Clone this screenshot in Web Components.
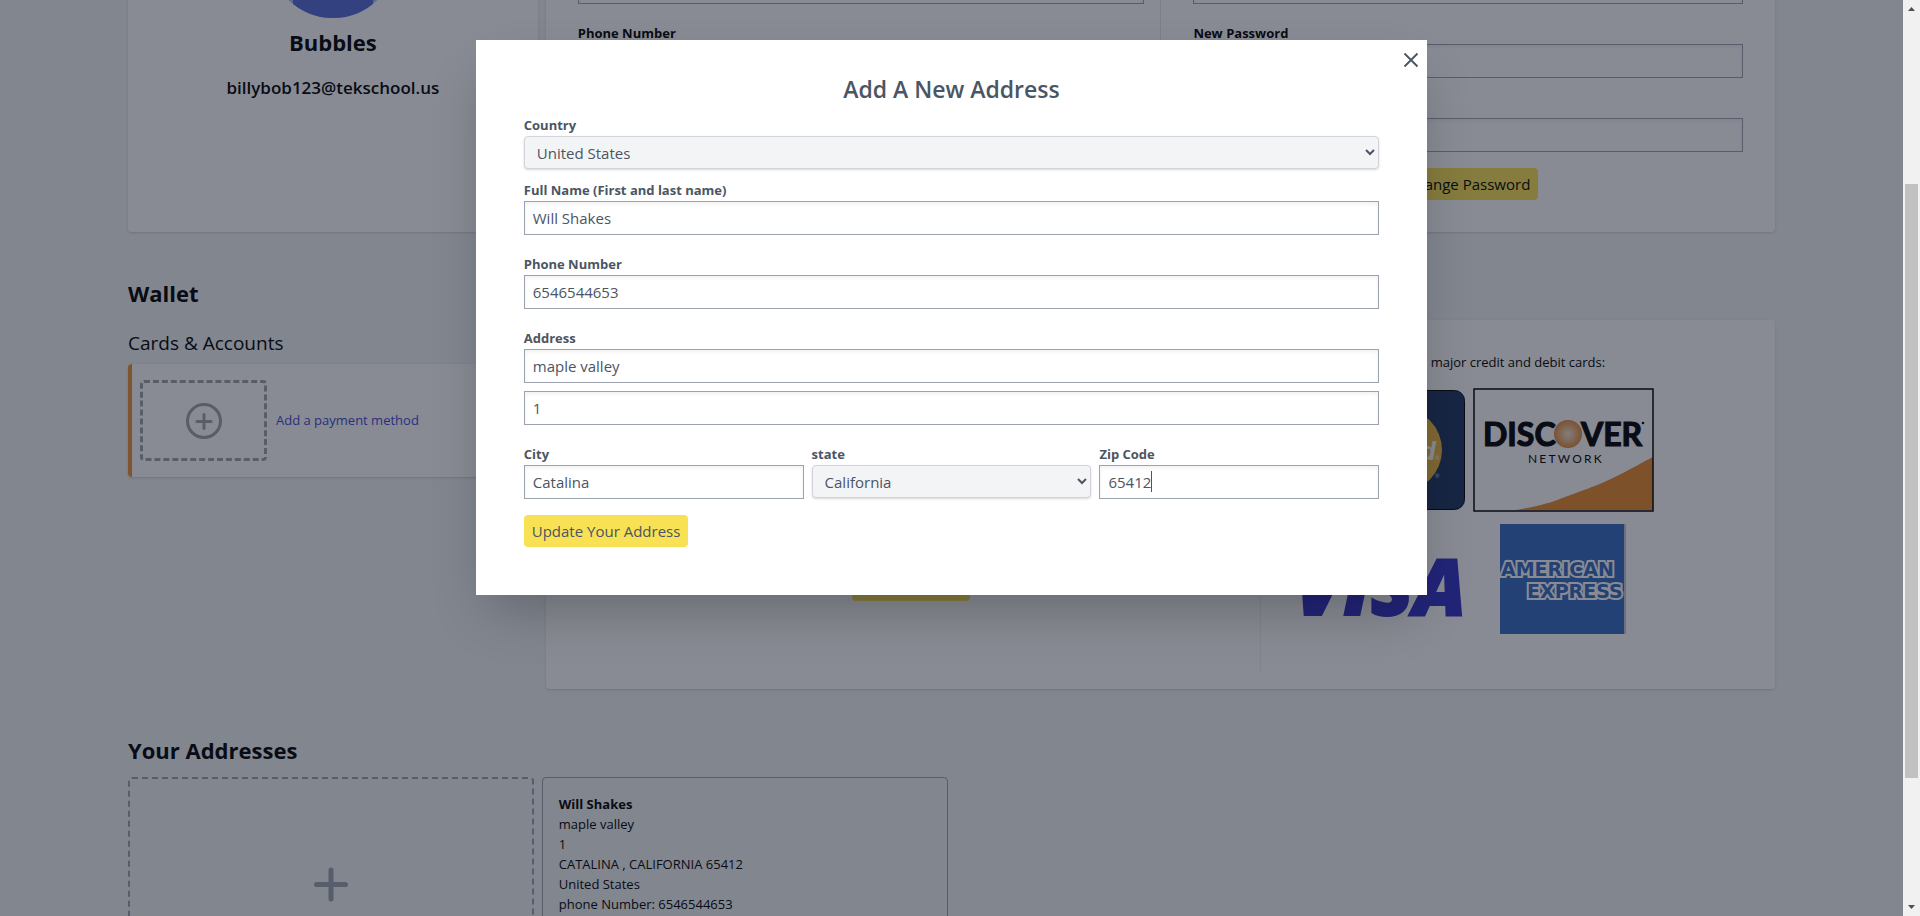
<!DOCTYPE html>
<html lang="en">
<head>
<meta charset="utf-8">
<title>Account</title>
<style>
  html, body { margin: 0; height: 100%; }
  body {
    font-family: "Open Sans", "Noto Sans", sans-serif;
    font-size: 15px;
    line-height: 24px;
    color: #000;
    overflow: hidden;
  }
</style>
</head>
<body>
<app-shell>
  <account-page></account-page>
  <address-dialog slot="dialog"></address-dialog>
</app-shell>

<script>
const define = (name, html, init) => {
  const template = document.createElement('template');
  template.innerHTML = '<style>*{box-sizing:border-box}h1,h2,h3,p{margin:0}[hidden]{display:none}</style>' + html;
  customElements.define(name, class extends HTMLElement {
    constructor() {
      super();
      this.attachShadow({ mode: 'open' }).append(template.content.cloneNode(true));
    }
    connectedCallback() { if (init) init(this, this.shadowRoot); }
  });
};

/* ---------- form controls ---------- */
define('text-field', `
<style>
  :host { display: block; min-width: 0; }
  label { display: block; font-size: 13px; font-weight: 700; line-height: 18px; padding-bottom: 2px; }
  .box { position: relative; }
  input {
    display: block; width: 100%; height: 34px; margin: 0; padding: 0 8px;
    border: 1px solid #9ca3af; border-radius: 0; background: #fff; color: inherit;
    font: inherit; box-shadow: inset 0 2px 4px rgba(0,0,0,.06); outline: none;
  }
  .caret { position: absolute; top: 6px; left: 52px; width: 1px; height: 21px; background: #4b5563; }
</style>
<label for="field"></label>
<div class="box"><input id="field" type="text"><span class="caret" hidden></span></div>`,
(host, root) => {
  const label = root.querySelector('label'), input = root.querySelector('input');
  const text = host.getAttribute('label');
  if (text) label.textContent = text; else label.hidden = true;
  if (host.hasAttribute('name')) input.setAttribute('aria-label', host.getAttribute('name'));
  input.type = host.getAttribute('type') || 'text';
  input.value = host.getAttribute('value') || '';
  root.querySelector('.caret').hidden = !host.hasAttribute('editing');
});

define('select-field', `
<style>
  :host { display: block; min-width: 0; }
  label { display: block; font-size: 13px; font-weight: 700; line-height: 18px; padding-bottom: 2px; }
  select {
    display: block; width: 100%; height: 33px; margin: 0; padding: 0 8px;
    border: 1px solid #d1d5db; border-radius: 4px; background-color: #f3f4f6; color: inherit;
    font: inherit; box-shadow: 0 1px 3px rgba(0,0,0,.1), 0 1px 2px rgba(0,0,0,.06);
  }
</style>
<label for="field"></label>
<select id="field"></select>`,
(host, root) => {
  root.querySelector('label').textContent = host.getAttribute('label');
  root.querySelector('select').replaceChildren(new Option(host.getAttribute('value')));
});

define('yellow-button', `
<style>
  :host { display: block; width: fit-content; }
  button {
    display: block; height: 32px; margin: 0; padding: 0 8px; border: 0; border-radius: 4px;
    background: #f8e154; color: inherit; font: inherit; white-space: nowrap; cursor: pointer;
  }
</style>
<button type="button"><slot></slot></button>`);

define('white-card', `
<style>
  :host {
    display: block; background: #fff; border-radius: 4px;
    box-shadow: 0 1px 3px rgba(0,0,0,.1), 0 1px 2px rgba(0,0,0,.06);
  }
</style>
<slot></slot>`);

/* ---------- profile ---------- */
define('profile-summary', `
<style>
  :host { display: flex; flex-direction: column; align-items: center; padding: 32px; }
  svg { display: block; width: 128px; height: 128px; }
  h2 { font-size: 22px; line-height: 32px; font-weight: 700; margin: 8px 0 16px; }
  p { font-size: 17px; line-height: 28px; font-weight: 600; }
</style>
<svg viewBox="0 0 128 128" aria-hidden="true">
  <clipPath id="round"><circle cx="64" cy="64" r="64"/></clipPath>
  <g clip-path="url(#round)">
    <rect width="128" height="128" fill="#a9bdf0"/>
    <rect x="24" y="56" width="80" height="72" fill="#556ad9"/>
    <circle cx="64" cy="44" r="24" fill="#556ad9"/>
  </g>
</svg>
<h2>Bubbles</h2>
<p>billybob123@tekschool.us</p>`);

define('profile-forms', `
<style>
  :host { display: grid; grid-template-columns: 1fr 1fr; }
  form { display: flex; flex-direction: column; gap: 20px; padding: 32px 16px 32px 32px; }
  form + form { padding-right: 32px; border-left: 1px solid #e5e7eb; }
  h3 { font-size: 22px; line-height: 36px; margin-bottom: 4px; }
  .last { display: grid; gap: 16px; justify-items: center; }
  .last text-field { width: 100%; }
</style>
<form>
  <h3>Personal Information</h3>
  <text-field label="Name"></text-field>
  <text-field label="Phone Number"></text-field>
</form>
<form>
  <h3>Password</h3>
  <text-field label="Previous Password" type="password"></text-field>
  <text-field label="New Password" type="password"></text-field>
  <div class="last">
    <text-field label="New Password Again" type="password"></text-field>
    <yellow-button>Change Password</yellow-button>
  </div>
</form>`);

/* ---------- wallet ---------- */
define('payment-method', `
<style>
  :host { display: block; }
  .row {
    display: flex; align-items: center; gap: 9px; padding: 16px 8px;
    border-left: 4px solid #ed9038; border-radius: 4px;
  }
  .slot {
    display: grid; place-items: center; width: 127px; height: 81px;
    border: 3px dashed #a0a2a6; border-radius: 4px;
  }
  svg { display: block; width: 36px; height: 36px; }
  a { font-size: 13px; line-height: 18px; padding-bottom: 2px; color: #3f48d4; text-decoration: none; }
</style>
<white-card><div class="row">
  <div class="slot">
    <svg viewBox="0 0 36 36" fill="none" stroke="#a0a2a6" stroke-linecap="round" aria-hidden="true">
      <circle cx="18" cy="18" r="16.5" stroke-width="3"/>
      <path d="M18 11.500v14M11 18.500h14" stroke-width="3"/>
    </svg>
  </div>
  <a href="#payment">Add a payment method</a>
</div></white-card>`);

define('accepted-cards', `
<style>
  :host { display: block; padding: 16px 24px; }
  p { width: 320px; font-size: 13px; line-height: 20px; text-align: end; white-space: nowrap; margin-bottom: 16px; }
  .logos { display: grid; grid-template-columns: 180px 180px; gap: 12px 8px; justify-items: center; align-items: center; }
  svg { display: block; overflow: visible; }
</style>
<p>Tek School accepts major credit and debit cards:</p>
<div class="logos">
  <svg width="180" height="124" viewBox="0 0 180 124" role="img" aria-label="MasterCard">
    <rect x=".5" y="2.500" width="179" height="119" rx="10" fill="#1c3560" stroke="#000"/>
    <circle cx="65" cy="62" r="42" fill="#c8322d"/>
    <circle cx="115" cy="62" r="42" fill="#efb83f"/>
    <text x="151" y="72" text-anchor="end" font-family="Liberation Sans" font-weight="700" font-style="italic" font-size="26" fill="#fff">MasterCard</text>
    <text x="150" y="72" font-family="Liberation Sans" font-size="6" fill="#fff">®</text>
    <text x="150" y="90" font-family="Liberation Sans" font-size="6" fill="#d8dbe0">®</text>
  </svg>
  <svg width="180" height="124" viewBox="0 0 180 124" role="img" aria-label="Discover Network">
    <defs><radialGradient id="sun"><stop offset="0" stop-color="#f8e4d0"/><stop offset=".5" stop-color="#eeb888"/><stop offset="1" stop-color="#e28a3c"/></radialGradient></defs>
    <rect x="1" y="1" width="179" height="122" fill="#fff"/>
    <path d="M42 122 C62 119 78 115 92 109 C120 99 132 94 146 87 C160 80 168 75 180 69V122Z" fill="#e88a2d"/>
    <rect x="1" y="1" width="179" height="122" fill="none" stroke="#000" stroke-width="1.500"/>
    <g font-family="Lato" font-weight="700" font-size="32" fill="#000" stroke="#000" stroke-width="1.200">
      <text x="10" y="58">DISC</text><text x="108" y="58">VER</text>
    </g>
    <circle cx="95" cy="46" r="14" fill="url(#sun)"/>
    <circle cx="170" cy="35" r="1.300"/>
    <text x="55" y="75" font-family="Lato" font-size="12" letter-spacing="2.200">NETWORK</text>
  </svg>
  <svg width="180" height="110" viewBox="0 0 180 110" role="img" aria-label="Visa">
    <text x="10" y="91" font-family="Open Sans" font-weight="800" font-style="italic" font-size="78" fill="#3330c8" stroke="#3330c8" stroke-width="2">VISA</text>
  </svg>
  <svg width="126" height="110" viewBox="0 0 126 110" role="img" aria-label="American Express">
    <rect width="124" height="110" fill="#346ac0"/>
    <rect x="124" width="2" height="110" fill="#c4cbd8"/>
    <g font-family="DejaVu Sans" font-weight="700" font-size="19" fill="#346ac0" stroke="#fff" stroke-width="4" paint-order="stroke">
      <text x="1" y="52">AMERICAN</text><text x="27" y="74">EXPRESS</text>
    </g>
  </svg>
</div>`);

define('wallet-panel', `
<style>
  :host { display: block; padding: 16px; }
  .cols { display: grid; grid-template-columns: 7fr 5fr; min-height: 337px; }
  .intro { display: flex; flex-direction: column; align-items: center; gap: 12px; padding: 16px 24px 72px; }
  .intro yellow-button { margin-top: auto; }
  accepted-cards { border-left: 1px solid #f0f1f3; }
</style>
<div class="cols">
  <div class="intro">
    <h3>Add a credit or debit card</h3>
    <yellow-button>Add Your Card</yellow-button>
  </div>
  <accepted-cards></accepted-cards>
</div>`);

/* ---------- addresses ---------- */
define('add-address', `
<style>
  :host { display: block; }
  button {
    display: flex; flex-direction: column; align-items: center; justify-content: center; gap: 6px;
    width: 100%; height: 256px; padding: 0; border: 2px dashed #9ca3af; border-radius: 4px;
    background: none; color: inherit; font: inherit; font-size: 28px; font-weight: 700; line-height: 36px;
  }
  svg { display: block; width: 48px; height: 40px; }
</style>
<button type="button">
  <svg viewBox="0 0 48 40" fill="none" stroke="#9ca3af" stroke-width="5" stroke-linecap="round" aria-hidden="true">
    <path d="M24 6v29M9.500 20.500h29"/>
  </svg>
  <span>Add Address</span>
</button>`);

define('address-card', `
<style>
  :host { display: block; padding: 16px; border: 1px solid #9ca3af; border-radius: 4px; font-size: 13px; line-height: 20px; }
  .name { font-weight: 700; }
</style>
<p class="name">Will Shakes</p>
<p>maple valley</p>
<p>1</p>
<p>CATALINA , CALIFORNIA 65412</p>
<p>United States</p>
<p>phone Number: 6546544653</p>`);

/* ---------- page ---------- */
define('account-page', `
<style>
  :host { display: block; padding: 0 128px; margin-top: -142px; }
  .split { display: grid; grid-template-columns: 1fr 3fr; gap: 8px; }
  h2 { font-size: 22px; line-height: 34px; font-weight: 700; margin: 44px 0 10px; }
  h3 { font-size: 19px; line-height: 30px; font-weight: 400; margin: 8px 0 6px; }
  .addresses { display: grid; grid-template-columns: repeat(4, 1fr); gap: 8px; }
</style>
<section class="split">
  <white-card><profile-summary></profile-summary></white-card>
  <white-card><profile-forms></profile-forms></white-card>
</section>
<section>
  <h2>Wallet</h2>
  <div class="split">
    <div><h3>Cards &amp; Accounts</h3><payment-method></payment-method></div>
    <white-card><wallet-panel></wallet-panel></white-card>
  </div>
</section>
<section>
  <h2>Your Addresses</h2>
  <div class="addresses"><add-address></add-address><address-card></address-card></div>
</section>`);

/* ---------- dialog ---------- */
define('address-dialog', `
<style>
  :host {
    position: absolute; inset: 0; display: flex; justify-content: center; align-items: flex-start;
    padding-top: 40px; background: rgba(17,24,39,.5); color: #4b5563;
  }
  section {
    position: relative; width: 50%; padding: 32px 48px 48px; background: #fff;
    box-shadow: 0 25px 50px -12px rgba(0,0,0,.25);
  }
  .close { position: absolute; top: 10px; right: 6px; width: 20px; height: 20px; padding: 0; border: 0; background: none; color: inherit; }
  .close svg { display: block; width: 20px; height: 20px; }
  h1 { font-size: 23px; line-height: 34px; font-weight: 600; text-align: center; margin-bottom: 10px; }
  form { display: grid; gap: 20px; }
  .group { display: grid; gap: 12px; }
  .lines { display: grid; gap: 8px; }
  .three { display: grid; grid-template-columns: repeat(3, 1fr); gap: 8px; }
  .end { display: grid; gap: 16px; }
</style>
<section role="dialog" aria-label="Add A New Address">
  <button class="close" type="button" aria-label="Close">
    <svg viewBox="0 0 20 20" fill="none" stroke="currentColor" stroke-width="1.900" aria-hidden="true"><path d="M3.500 3.500l13 13M16.500 3.500l-13 13"/></svg>
  </button>
  <h1>Add A New Address</h1>
  <form>
    <div class="group">
      <select-field label="Country" value="United States"></select-field>
      <text-field label="Full Name (First and last name)" value="Will Shakes"></text-field>
    </div>
    <text-field label="Phone Number" value="6546544653"></text-field>
    <div class="lines">
      <text-field label="Address" value="maple valley"></text-field>
      <text-field name="Address line 2" value="1"></text-field>
    </div>
    <div class="end">
      <div class="three">
        <text-field label="City" value="Catalina"></text-field>
        <select-field label="state" value="California"></select-field>
        <text-field label="Zip Code" value="65412" editing></text-field>
      </div>
      <yellow-button>Update Your Address</yellow-button>
    </div>
  </form>
</section>`);

/* ---------- window with its scroll bar ---------- */
define('app-shell', `
<style>
  :host { display: grid; grid-template-columns: minmax(0, 1fr) 17px; height: 100vh; }
  .pane { position: relative; display: flow-root; overflow: hidden; background: #f3f4f6; }
  .bar { display: grid; grid-template-rows: 17px 167fr 594fr 121fr 17px; justify-items: center; background: #f1f1f1; }
  .thumb { grid-row: 3; width: 13px; background: #c1c1c1; }
  .bar svg { display: block; width: 17px; height: 17px; fill: #505050; }
  .down { grid-row: 5; }
</style>
<div class="pane"><slot></slot><slot name="dialog"></slot></div>
<div class="bar" aria-hidden="true">
  <svg viewBox="0 0 17 17"><path d="M5 11h7L8.500 7z"/></svg>
  <div class="thumb"></div>
  <svg class="down" viewBox="0 0 17 17"><path d="M5 6h7L8.500 10z"/></svg>
</div>`);
</script>
</body>
</html>
